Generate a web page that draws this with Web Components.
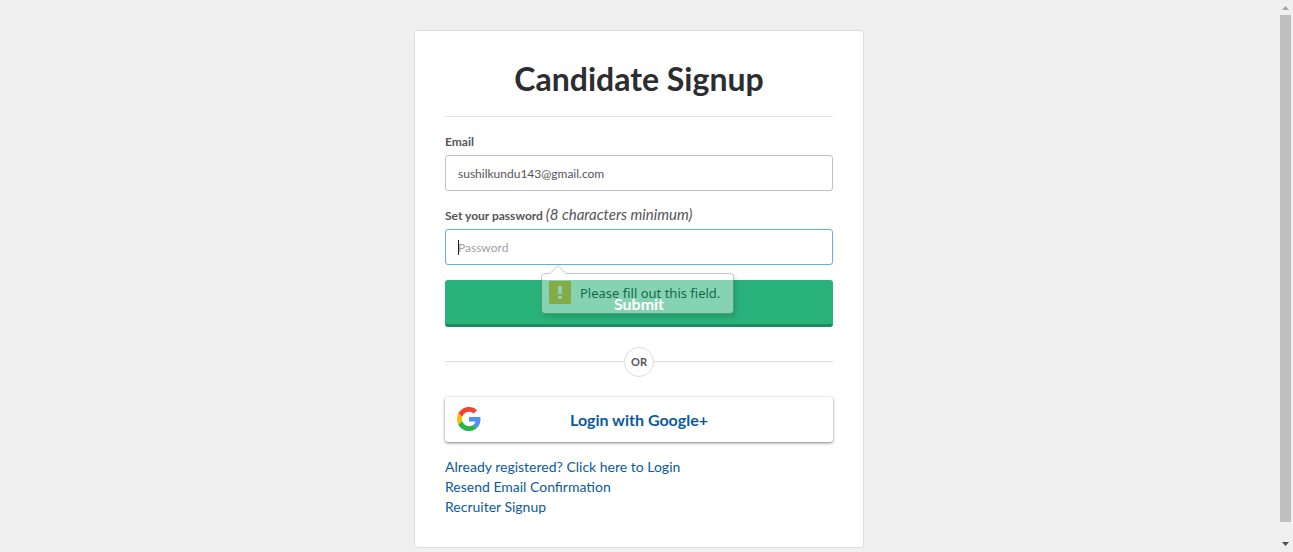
<!DOCTYPE html>
<html lang="en">
<head>
<meta charset="utf-8">
<title>Candidate Signup</title>
<style>
html, body { margin: 0; height: 100%; }
body { background: #f0f0f0; font-family: Lato, sans-serif; font-size: 14px; line-height: 20px; color: #555459; overflow: hidden; }
</style>
</head>
<body>
<signup-page></signup-page>

<template id="t-page">
<style>
:host { display: grid; grid-template-columns: minmax(0, 1fr) 15px; height: 100vh; }
main { overflow: hidden; padding: 30px 16px 0; }
signup-card { margin: 0 auto; max-width: 450px; }
nav { display: flex; flex-direction: column; margin-top: 15px; align-items: flex-start; }
</style>
<main>
  <signup-card heading="Candidate Signup">
    <form-field label="Email" kind="email" value="sushilkundu143@gmail.com"></form-field>
    <form-field label="Set your password" hint="(8 characters minimum)" kind="password" placeholder="Password" active>
      <validation-bubble>Please fill out this field.</validation-bubble>
    </form-field>
    <submit-button>Submit</submit-button>
    <or-divider>OR</or-divider>
    <google-button>Login with Google+</google-button>
    <nav>
      <text-link>Already registered? Click here to Login</text-link>
      <text-link>Resend Email Confirmation</text-link>
      <text-link>Recruiter Signup</text-link>
    </nav>
  </signup-card>
</main>
<scroll-rail></scroll-rail>
</template>

<template id="t-card">
<style>
:host { display: block; box-sizing: border-box; background: #fff; border: 1px solid #ddd; border-radius: 3px; padding: 30px; }
h1 { margin: 0 0 15px; padding-bottom: 19px; border-bottom: 1px solid #e5e5e5; font-size: 32px; line-height: 36px; font-weight: 700; text-align: center; color: #2c2d30; }
</style>
<h1></h1>
<slot></slot>
</template>

<template id="t-field">
<style>
:host { display: block; margin-bottom: 15px; }
label { display: block; font-size: 12px; line-height: 20px; margin-bottom: 3px; font-weight: 700; }
em { font-size: 15px; line-height: 16px; font-weight: 400; }
.box { position: relative; }
input { display: block; box-sizing: border-box; width: 100%; height: 36px; margin: 0; padding: 0 12px; border: 1px solid #c0c1c5; border-radius: 3px; background: #fff; color: #555459; font: inherit; font-size: 12px; outline: none; }
input::placeholder { color: #a0a0a4; opacity: 1; }
:host([active]) input { border-color: #64aee8; }
.caret { display: none; position: absolute; left: 13px; top: 11px; width: 1px; height: 15px; background: #222; }
:host([active]) .caret { display: block; }
::slotted(*) { position: absolute; left: 96px; top: 36px; z-index: 2; }
</style>
<label for="control"><span></span> <em></em></label>
<div class="box"><input id="control"><i class="caret"></i><slot></slot></div>
</template>

<template id="t-bubble">
<style>
:host { display: block; opacity: .43; font-family: "Noto Sans", sans-serif; font-size: 13px; line-height: 24px; color: #000; white-space: nowrap; }
.arrow { display: block; margin-left: 8px; margin-bottom: -1px; position: relative; }
.panel { display: flex; align-items: flex-start; gap: 9px; box-sizing: border-box; width: 193px; height: 41px; padding: 7px; border: 1px solid #808080; border-radius: 4px; background: #fff; box-shadow: 2px 3px 5px rgba(0,0,0,.3); }
.icon { flex: none; width: 22px; height: 23px; }
</style>
<svg class="arrow" width="18" height="9" viewBox="0 0 18 9"><path d="M1 8.500 9 .5 17 8.500V9H1z" fill="#fff"/><path d="M0 8.500H1L9 .5 17 8.500H18" fill="none" stroke="#808080"/></svg>
<div class="panel"><svg class="icon" viewBox="0 0 22 23"><rect width="22" height="23" rx="1" fill="#fba200"/><path d="M9 5h4v8H9zM9 15h4v3H9z" fill="#fff"/></svg><span><slot></slot></span></div>
</template>

<template id="t-submit">
<style>
:host { display: block; }
button { display: block; width: 100%; height: 47px; margin: 0; padding: 0; border: 0; border-bottom: 3px solid #1f8a5f; border-radius: 3px; background: #2ab27b; color: #fff; font: inherit; font-size: 16px; line-height: 20px; padding-top: 4px; font-weight: 700; }
</style>
<button type="submit"><slot></slot></button>
</template>

<template id="t-divider">
<style>
:host { display: flex; align-items: center; margin: 20px 0; font-size: 11px; font-weight: 700; }
:host::before, :host::after { content: ""; flex: 1; height: 1px; margin-bottom: 2px; background: #ddd; }
span { box-sizing: border-box; width: 30px; height: 30px; line-height: 28px; border: 1px solid #ddd; border-radius: 50%; text-align: center; }
</style>
<span><slot></slot></span>
</template>

<template id="t-google">
<style>
:host { display: block; }
a { position: relative; display: flex; align-items: center; justify-content: center; height: 45px; border-radius: 3px; background: #fff; color: #0b5a9d; font-size: 16px; font-weight: 700; text-decoration: none; box-shadow: 0 1px 3px rgba(0,0,0,.5); }
svg { position: absolute; left: 12px; top: 10px; }
</style>
<a href="#"><svg width="24" height="24" viewBox="0 0 48 48" aria-hidden="true">
<path fill="#f44336" d="M24 9.500c3.540 0 6.710 1.220 9.210 3.600l6.850-6.850C35.900 2.380 30.470 0 24 0 14.620 0 6.510 5.380 2.560 13.220l7.980 6.190C12.430 13.720 17.740 9.500 24 9.500z"/>
<path fill="#518ef8" d="M46.980 24.550c0-1.570-.15-3.090-.38-4.550H24v9.020h12.940c-.58 2.960-2.260 5.480-4.780 7.180l7.730 6c4.510-4.180 7.090-10.360 7.090-17.650z"/>
<path fill="#ffbb00" d="M10.530 28.590c-.48-1.450-.76-2.990-.76-4.590s.27-3.140.76-4.590l-7.980-6.190C.92 16.460 0 20.120 0 24c0 3.880.92 7.540 2.560 10.780z"/>
<path fill="#28b446" d="M24 48c6.480 0 11.930-2.130 15.890-5.810l-7.730-6c-2.150 1.450-4.920 2.300-8.160 2.300-6.260 0-11.570-4.220-13.470-9.910l-7.980 6.190C6.510 42.620 14.620 48 24 48z"/>
</svg><slot></slot></a>
</template>

<template id="t-link">
<style>
:host { display: block; }
a { color: #0b5a9d; text-decoration: none; }
</style>
<a href="#"><slot></slot></a>
</template>

<template id="t-rail">
<style>
:host { display: flex; flex-direction: column; align-items: center; }
svg { display: block; flex: none; }
.track { flex: 1; width: 11px; padding-bottom: 15px; }
.thumb { height: 100%; background: #bfbfbf; }
</style>
<svg width="15" height="15"><path d="M4 10 7.500 6 11 10z" fill="#a3a3a3"/></svg>
<div class="track"><div class="thumb"></div></div>
<svg width="15" height="15"><path d="M4 5 7.500 9 11 5z" fill="#505050"/></svg>
</template>

<script>
const define = (name, templateId, setup) => customElements.define(name, class extends HTMLElement {
  constructor() {
    super();
    this.attachShadow({ mode: "open" }).append(document.getElementById(templateId).content.cloneNode(true));
  }
  connectedCallback() {
    if (setup) setup(this, this.shadowRoot);
  }
});

define("validation-bubble", "t-bubble");
define("submit-button", "t-submit");
define("or-divider", "t-divider");
define("google-button", "t-google");
define("text-link", "t-link");
define("scroll-rail", "t-rail");
define("form-field", "t-field", (host, root) => {
  const input = root.querySelector("input");
  root.querySelector("span").textContent = host.getAttribute("label");
  root.querySelector("em").textContent = host.getAttribute("hint") || "";
  input.type = host.getAttribute("kind");
  input.value = host.getAttribute("value") || "";
  input.placeholder = host.getAttribute("placeholder") || "";
});
define("signup-card", "t-card", (host, root) => {
  root.querySelector("h1").textContent = host.getAttribute("heading");
});
define("signup-page", "t-page");
</script>
</body>
</html>
